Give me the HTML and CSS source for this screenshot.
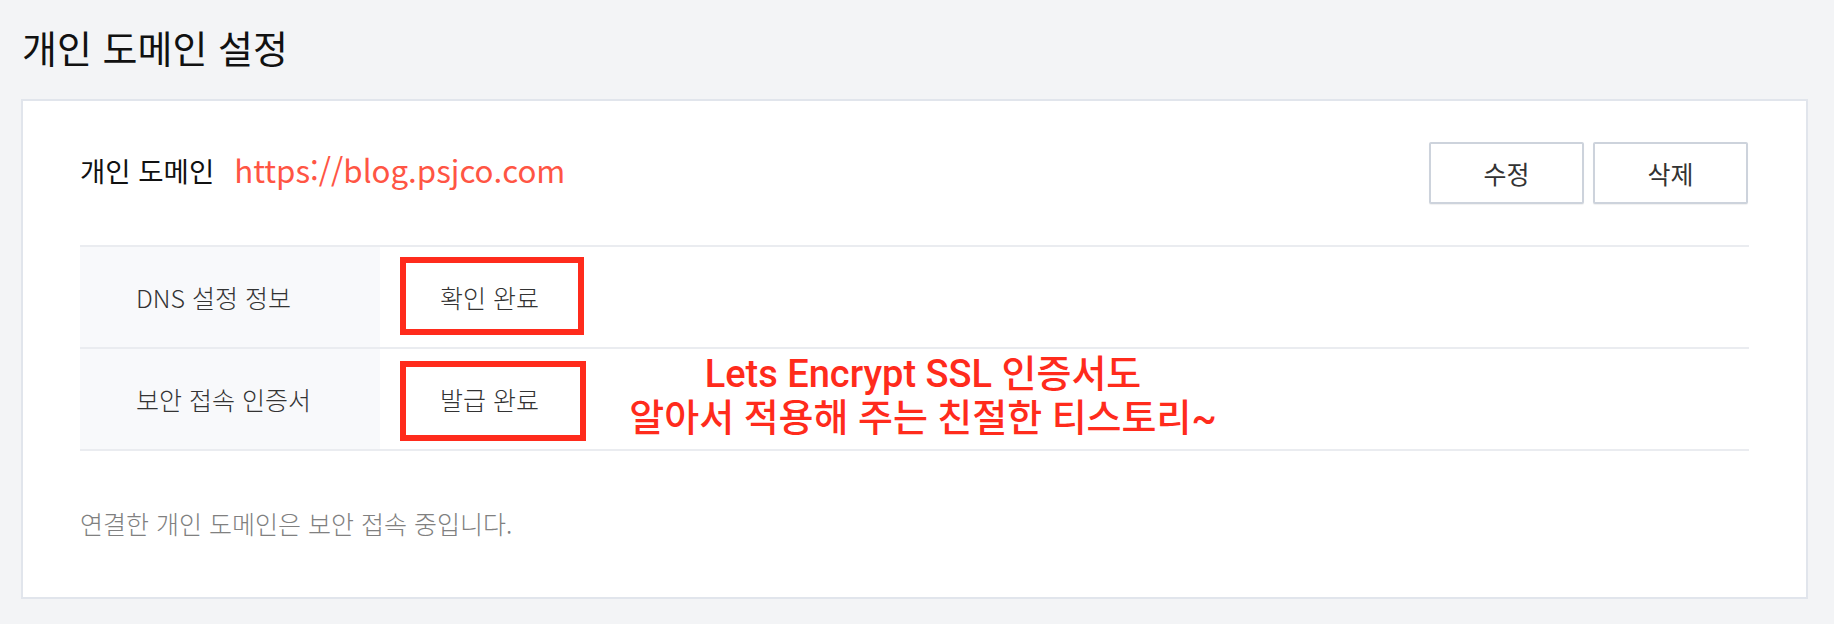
FILE: index.html
```html
<!DOCTYPE html>
<html lang="ko">
<head>
  <meta charset="UTF-8">
  <meta name="viewport" content="width=device-width, initial-scale=1.0">
  <title>개인 도메인 설정</title>
  <link rel="stylesheet" href="styles.css">
</head>
<body>
  <!-- 제목 -->
  <h1 class="page-title">개인 도메인 설정</h1>

  <!-- 도메인 카드 -->
  <section class="domain-card">
    <div class="domain-head">
      <div class="domain-name">
        <span class="domain-label">개인 도메인</span>
        <a class="domain-url" href="#">https://blog.psjco.com</a>
      </div>
      <div class="domain-actions">
        <button type="button" class="btn">수정</button>
        <button type="button" class="btn">삭제</button>
      </div>
    </div>

    <div class="status-table">
      <div class="status-row">
        <div class="status-key">DNS 설정 정보</div>
        <div class="status-value">
          확인 완료
          <span class="mark"></span>
        </div>
      </div>
      <div class="status-row">
        <div class="status-key">보안 접속 인증서</div>
        <div class="status-value">
          발급 완료
          <span class="mark mark-lower"></span>
        </div>
      </div>
    </div>

    <p class="domain-note">연결한 개인 도메인은 보안 접속 중입니다.</p>

    <!-- 빨간 메모 -->
    <div class="memo">Lets Encrypt SSL 인증서도<br>알아서 적용해 주는 친절한 티스토리~</div>
  </section>
</body>
</html>
```

FILE: styles.css
```css
* {
  box-sizing: border-box;
}

body {
  margin: 0;
  padding: 28px 26px 0 21px;
  background: #f3f4f6;
  font-family: "Noto Sans CJK KR", "Noto Sans", sans-serif;
  color: #111;
}

/* 제목 */
.page-title {
  margin: 0 0 33px 1px;
  font-size: 38px;
  font-weight: 400;
  line-height: 38px;
  color: #111;
}

/* 카드 */
.domain-card {
  position: relative;
  background: #fff;
  border: 2px solid #e1e5ec;
  padding: 41px 57px 57px;
}

.domain-head {
  display: flex;
  align-items: center;
  justify-content: space-between;
  height: 62px;
  margin-bottom: 41px;
}

.domain-name {
  display: flex;
  align-items: center;
  margin-bottom: 7px;
}

.domain-label {
  font-size: 27.5px;
  color: #111;
}

.domain-url {
  margin-left: 20px;
  font-size: 31.25px;
  color: #ff5544;
  text-decoration: none;
}

.domain-actions {
  display: flex;
  gap: 9px;
  margin-right: 1px;
}

.btn {
  width: 155px;
  height: 62px;
  background: #fff;
  border: 2px solid #cdd3dc;
  border-radius: 2px;
  box-shadow: 0 1px 1px rgba(0, 0, 0, 0.06);
  font-family: inherit;
  font-size: 25px;
  color: #333;
  cursor: pointer;
}

/* 상태 표 */
.status-table {
  border-top: 2px solid #eaecf0;
}

.status-row {
  display: grid;
  grid-template-columns: 300px 1fr;
  height: 102px;
  border-bottom: 2px solid #eaecf0;
}

.status-key {
  display: flex;
  align-items: center;
  padding-left: 56px;
  background: #f8f9fb;
  font-size: 25px;
  font-weight: 300;
  color: #333;
}

.status-value {
  position: relative;
  display: flex;
  align-items: center;
  padding-left: 60px;
  font-size: 25px;
  font-weight: 300;
  color: #333;
}

.mark {
  position: absolute;
  left: 20px;
  top: 10px;
  width: 184px;
  height: 78px;
  border: 6px solid #ff2b1c;
}

.mark-lower {
  top: 12px;
  width: 186px;
  height: 80px;
}

.domain-note {
  margin: 55px 0 0;
  font-size: 25px;
  font-weight: 300;
  line-height: 34px;
  color: #808080;
}

/* 메모 */
.memo {
  position: absolute;
  left: 550px;
  top: 251px;
  width: 700px;
  text-align: center;
  font-family: Roboto, "Noto Sans CJK KR", sans-serif;
  font-size: 38px;
  font-weight: 500;
  line-height: 44px;
  color: #ff2b1c;
}
```
